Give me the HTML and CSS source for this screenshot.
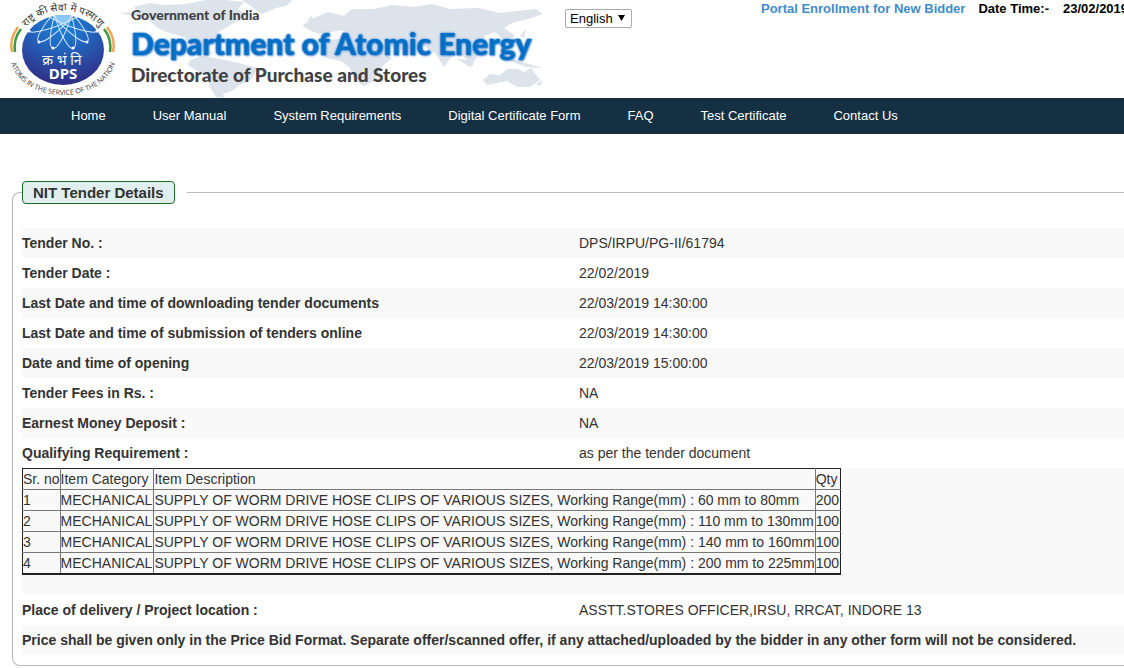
FILE: index.html
```html
<!DOCTYPE html>
<html lang="en">
<head>
<meta charset="utf-8">
<title>NIT Tender Details</title>
<link rel="stylesheet" href="styles.css">
</head>
<body>
<header class="masthead">
  <div class="banner">
    <svg class="map" width="545" height="98" viewBox="0 0 545 98" aria-hidden="true">
      <g fill="#dce3eb">
        <path d="M118 13L138 12 134 7 150 3 164 5 186 4 206 0 226 0 244 2 238 9 248 15 240 20 232 24 220 31 214 38 206 43 208 50 214 54 205 53 192 46 184 37 166 32 158 28 150 21 140 17Z"/>
        <path d="M242 0H292L286 6 276 8 262 14 256 10Z"/>
        <path d="M190 60L202 56 220 59 235 62 257 68 252 79 240 85 232 91 223 94 224 98 216 97 209 86 209 76 195 70 188 65Z"/>
        <path d="M302 26L312 19 328 12 344 16 352 9 374 9 392 5 414 7 432 4 450 9 478 8 500 13 536 9 543 14 528 19 514 22 504 28 515 36 506 42 495 32 484 36 488 49 478 55 472 65 463 56 452 56 444 67 436 54 419 43 406 51 394 48 381 40 350 39 342 30 320 34 311 31Z"/>
        <path d="M330 40L348 38 378 42 384 54 392 58 380 68 374 81 364 86 354 80 350 68 341 61 326 58 323 49Z"/>
        <path d="M483 80L490 74 500 75 507 69 518 69 524 72 531 68 540 80 530 87 517 87 507 81 487 85Z"/>
        <path d="M456 58L466 60 474 65 470 67ZM499 57L510 58 525 63 543 68 526 67ZM520 36L526 29 524 38ZM536 84L543 80 540 86ZM307 22L311 16 315 21Z"/>
      </g>
    </svg>
    <svg class="logo" width="125" height="98" viewBox="0 0 125 98" role="img" aria-label="DPS emblem">
      <defs>
        <radialGradient id="disc" cx="50%" cy="10%" r="85%">
          <stop offset="0" stop-color="#1d86dc"/><stop offset=".5" stop-color="#2460b8"/><stop offset="1" stop-color="#303189"/>
        </radialGradient>
        <clipPath id="round"><ellipse cx="63" cy="50" rx="41" ry="35"/></clipPath>
        <path id="arc-top" d="M20 38A45 39 0 0 1 106 38"/>
        <path id="arc-bottom" d="M10 55A53 40 0 0 0 116 55"/>
      </defs>
      <ellipse cx="63" cy="50" rx="41" ry="35" fill="url(#disc)"/>
      <g clip-path="url(#round)" fill="none" stroke="#cfe7fb" stroke-width="1">
        <circle cx="63" cy="15" r="9" fill="#8cc8f5" stroke="none"/>
        <ellipse cx="63" cy="15" rx="8" ry="35" transform="rotate(17 63 15)"/>
        <ellipse cx="63" cy="15" rx="8" ry="35" transform="rotate(-17 63 15)"/>
        <ellipse cx="63" cy="15" rx="8" ry="36" transform="rotate(43 63 15)"/>
        <ellipse cx="63" cy="15" rx="8" ry="36" transform="rotate(-43 63 15)"/>
        <ellipse cx="63" cy="15" rx="8" ry="38" transform="rotate(66 63 15)"/>
        <ellipse cx="63" cy="15" rx="8" ry="38" transform="rotate(-66 63 15)"/>
      </g>
      <g fill="#fff"><circle cx="39" cy="42" r="1.500"/><circle cx="53" cy="48" r="1.500"/><circle cx="73" cy="48" r="1.500"/><circle cx="87" cy="42" r="1.500"/><circle cx="29" cy="31" r="1.500"/><circle cx="97" cy="31" r="1.500"/></g>
      <g fill="none" stroke-width="2.500">
        <path d="M18 27Q9 39 12 52" stroke="#f2a45a"/><path d="M21 29Q13 39 15 52" stroke="#3d9640"/>
        <path d="M107 27Q116 39 113 52" stroke="#f2a45a"/><path d="M104 29Q112 39 110 52" stroke="#3d9640"/>
      </g>
      <text class="logo-hindi" x="62" y="65" text-anchor="middle">क्र भं नि</text>
      <text class="logo-name" x="63" y="79" text-anchor="middle">DPS</text>
      <text class="logo-ring hindi"><textPath href="#arc-top" startOffset="50%" text-anchor="middle">राष्ट्र की सेवा में परमाणु</textPath></text>
      <text class="logo-ring"><textPath href="#arc-bottom" startOffset="50%" text-anchor="middle">ATOMS IN THE SERVICE OF THE NATION</textPath></text>
    </svg>
    <div class="titles">
      <p class="gov">Government of India</p>
      <h1 class="dept">Department of Atomic Energy</h1>
      <p class="directorate">Directorate of Purchase and Stores</p>
    </div>
  </div>
  <div class="language">
    <select class="language-select" aria-label="Language"><option>English</option></select>
    <svg class="arrow" width="7" height="6" viewBox="0 0 7 6" aria-hidden="true"><path d="M0 0H7L3.500 6Z"/></svg>
  </div>
  <div class="session">
    <a class="enroll" href="#">Portal Enrollment for New Bidder</a>
    <span class="time-label">Date Time:-</span>
    <span>23/02/2019</span>
  </div>
</header>
<nav class="menu">
  <a href="#">Home</a>
  <a href="#">User Manual</a>
  <a href="#">System Requirements</a>
  <a href="#">Digital Certificate Form</a>
  <a href="#">FAQ</a>
  <a href="#">Test Certificate</a>
  <a href="#">Contact Us</a>
</nav>
<main class="content">
  <fieldset class="panel">
    <legend class="legend"><span class="legend-text">NIT Tender Details</span></legend>
    <table class="details">
      <tr><th scope="row">Tender No. :</th><td>DPS/IRPU/PG-II/61794</td></tr>
      <tr><th scope="row">Tender Date :</th><td>22/02/2019</td></tr>
      <tr><th scope="row">Last Date and time of downloading tender documents</th><td>22/03/2019 14:30:00</td></tr>
      <tr><th scope="row">Last Date and time of submission of tenders online</th><td>22/03/2019 14:30:00</td></tr>
      <tr><th scope="row">Date and time of opening</th><td>22/03/2019 15:00:00</td></tr>
      <tr><th scope="row">Tender Fees in Rs. :</th><td>NA</td></tr>
      <tr><th scope="row">Earnest Money Deposit :</th><td>NA</td></tr>
      <tr><th scope="row">Qualifying Requirement :</th><td>as per the tender document</td></tr>
      <tr><td class="items-cell" colspan="2">
        <table class="items">
          <tr><td>Sr. no</td><td>Item Category</td><td>Item Description</td><td>Qty</td></tr>
          <tr><td>1</td><td>MECHANICAL</td><td>SUPPLY OF WORM DRIVE HOSE CLIPS OF VARIOUS SIZES, Working Range(mm) : 60 mm to 80mm</td><td>200</td></tr>
          <tr><td>2</td><td>MECHANICAL</td><td>SUPPLY OF WORM DRIVE HOSE CLIPS OF VARIOUS SIZES, Working Range(mm) : 110 mm to 130mm</td><td>100</td></tr>
          <tr><td>3</td><td>MECHANICAL</td><td>SUPPLY OF WORM DRIVE HOSE CLIPS OF VARIOUS SIZES, Working Range(mm) : 140 mm to 160mm</td><td>100</td></tr>
          <tr><td>4</td><td>MECHANICAL</td><td>SUPPLY OF WORM DRIVE HOSE CLIPS OF VARIOUS SIZES, Working Range(mm) : 200 mm to 225mm</td><td>100</td></tr>
        </table>
      </td></tr>
      <tr><th scope="row">Place of delivery / Project location :</th><td>ASSTT.STORES OFFICER,IRSU, RRCAT, INDORE 13</td></tr>
      <tr><th colspan="2">Price shall be given only in the Price Bid Format. Separate offer/scanned offer, if any attached/uploaded by the bidder in any other form will not be considered.</th></tr>
    </table>
  </fieldset>
</main>
</body>
</html>
```

FILE: styles.css
```css
* { box-sizing: border-box; }
body {
  margin: 0;
  background: #fff;
  color: #333;
  font: 14px/20px "Liberation Sans", Arial, sans-serif;
  overflow-x: hidden;
}
.masthead { display: flex; align-items: flex-start; overflow: hidden; }
.banner { position: relative; display: flex; flex: none; width: 565px; height: 98px; }
.map { position: absolute; left: 0; top: 0; }
.logo { position: relative; flex: none; }
.logo-hindi { fill: #fff; font: 14px "Noto Sans", "Noto Sans Devanagari", sans-serif; }
.logo-name { fill: #fff; font: bold 15px "Noto Sans", sans-serif; }
.logo-ring { fill: #333; font: 7px "Open Sans", sans-serif; }
.logo-ring.hindi { font-size: 10px; }
.titles {
  position: relative;
  padding: 7px 0 0 6px;
  font-family: Lato, sans-serif;
  font-weight: 900;
  color: #414042;
  white-space: nowrap;
}
.titles p, .titles h1 { margin: 0; }
.titles .gov { font-size: 14px; line-height: 16px; }
.titles .dept {
  font-size: 30px;
  line-height: 40px;
  font-weight: 900;
  color: #0070c6;
  -webkit-text-stroke: 2px #e6f1fc;
  paint-order: stroke fill;
  text-shadow: 0 0 2px #4585cf, 0 0 2px #4585cf, 1px 1px 2px #7aa6dc;
}
.titles .directorate { font-size: 19px; line-height: 24px; }
.language { position: relative; flex: none; margin-top: 9px; }
.language-select {
  display: block;
  appearance: none;
  width: 67px;
  height: 19px;
  padding: 0 4px;
  border: 1px solid #a9a9a9;
  border-radius: 2px;
  background: #fff;
  color: #000;
  font: 13px "Liberation Sans", Arial, sans-serif;
}
.arrow { position: absolute; right: 7px; top: 6px; pointer-events: none; }
.session {
  display: flex;
  flex: 1;
  padding-left: 129px;
  color: #000;
  font-size: 13px;
  line-height: 18px;
  font-weight: bold;
  white-space: nowrap;
}
.enroll { margin-right: 13px; color: #428bca; text-decoration: none; }
.time-label { margin-right: 14px; }
.menu {
  display: flex;
  gap: 47px;
  min-height: 36px;
  padding: 8px 71px;
  background: #153043;
  font-size: 13px;
  white-space: nowrap;
}
.menu a { color: #fff; text-decoration: none; }
.content { padding: 47px 0 3px 12px; }
.panel {
  min-width: 0;
  margin: 0;
  padding: 24px 0 10px 9px;
  border: 1px solid #b9b9b9;
  border-right: 0;
  border-radius: 8px 0 0 8px;
}
.legend { padding: 0 12px 0 0; }
.legend-text {
  display: block;
  padding: 0 10px;
  border: 1px solid #1d6b2a;
  border-radius: 4px;
  background: #e0eeee;
  font-size: 15px;
  line-height: 21px;
  font-weight: bold;
}
.details { width: 100%; border-collapse: collapse; }
.details th, .details td { padding: 5px 0; text-align: left; }
.details th:first-child { width: 557px; }
.details > tbody > tr:nth-child(odd) { background: #f9f9f9; }
.details .items-cell { padding: 0 0 20px; }
.items {
  border: solid #222;
  border-width: 1px 1px 2px;
  border-collapse: collapse;
  white-space: nowrap;
}
.details .items td { padding: 0; border: 1px solid #777; }
.details .items td:nth-child(2) { padding-right: 1px; }
.details .items tr:first-child td { border-top-color: #222; }
.details .items td:first-child { border-left-color: #222; }
.details .items td:last-child { padding-right: 1px; border-right-color: #222; }
```
